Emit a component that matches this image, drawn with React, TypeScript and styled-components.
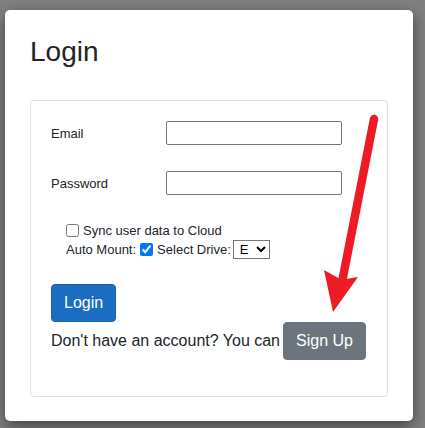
import React from "react";
import styled, { createGlobalStyle } from "styled-components";

const GlobalStyle = createGlobalStyle`
  html, body {
    margin: 0;
    padding: 0;
    background: #808080;
    font-family: "Liberation Sans", Arial, sans-serif;
    color: #212529;
  }
  * { box-sizing: border-box; }
`;

const Backdrop = styled.div`
  position: relative;
  width: 425px;
  height: 428px;
  padding: 10px 0 0 5px;
  overflow: hidden;
`;

const Modal = styled.div`
  width: 408px;
  height: 411px;
  background: #fff;
  border-radius: 5px;
  box-shadow: 0 5px 15px rgba(0, 0, 0, 0.5);
  padding: 25px 25px 24px;
`;

const Title = styled.h1`
  margin: 0;
  font-size: 28px;
  line-height: 34px;
  font-weight: 400;
  color: #212529;
`;

const Card = styled.div`
  margin-top: 31px;
  border: 1px solid rgba(0, 0, 0, 0.125);
  border-radius: 4px;
  padding: 20px;
  display: flex;
  flex-direction: column;
`;

const FieldRow = styled.div`
  display: flex;
  align-items: center;
  height: 24px;
  & + & {
    margin-top: 26px;
  }
`;

const Label = styled.label`
  width: 115px;
  font-size: 13px;
  color: #212529;
`;

const TextInput = styled.input`
  width: 176px;
  height: 24px;
  margin: 0;
  border: 1px solid #767676;
  border-radius: 2px;
  padding: 1px 2px;
  font-size: 13px;
  background: #fff;
`;

const Options = styled.div`
  margin-top: 26px;
  padding-left: 15px;
  font-size: 13px;
  color: #212529;
`;

const OptionLine = styled.div<{ $gapTop?: number }>`
  display: flex;
  align-items: center;
  height: 18px;
  margin-top: ${(p) => p.$gapTop ?? 0}px;
  white-space: nowrap;
`;

const Checkbox = styled.input.attrs({ type: "checkbox" })<{ $ml?: number }>`
  width: 13px;
  height: 13px;
  margin: 0 4px 0 ${(p) => p.$ml ?? 0}px;
  accent-color: #0075ff;
`;

const DriveSelect = styled.select`
  width: 37px;
  height: 19px;
  margin: 0 0 0 2px;
  font-family: "Liberation Sans", Arial, sans-serif;
  font-size: 13px;
  color: #000;
  border: 1px solid #767676;
  border-radius: 0;
  background: #fff;
  padding: 0 0 0 2px;
`;

const Button = styled.button<{ $variant: "primary" | "secondary" }>`
  font-family: "Liberation Sans", Arial, sans-serif;
  font-size: 16px;
  line-height: 24px;
  padding: 6px 12px;
  border-radius: 4px;
  color: #fff;
  cursor: pointer;
  background: ${(p) => (p.$variant === "primary" ? "#1b6ec2" : "#6c757d")};
  border: 1px solid ${(p) => (p.$variant === "primary" ? "#1861ac" : "#6c757d")};
`;

const LoginButton = styled(Button)`
  align-self: flex-start;
  margin-top: 26px;
`;

const SignupLine = styled.div`
  display: flex;
  align-items: baseline;
  margin-bottom: 16px;
  font-size: 16px;
  color: #212529;
  white-space: nowrap;
`;

const SignupButton = styled(Button)`
  margin-left: 3px;
`;

const ArrowLayer = styled.svg`
  position: absolute;
  left: 0;
  top: 0;
  pointer-events: none;
`;

export default function App() {
  return (
    <>
      <GlobalStyle />
      <Backdrop>
        <Modal>
          <Title>Login</Title>
          <Card>
            <FieldRow>
              <Label>Email</Label>
              <TextInput type="text" />
            </FieldRow>
            <FieldRow>
              <Label>Password</Label>
              <TextInput type="password" />
            </FieldRow>
            <Options>
              <OptionLine>
                <Checkbox />
                Sync user data to Cloud
              </OptionLine>
              <OptionLine $gapTop={1}>
                Auto Mount:
                <Checkbox $ml={4} defaultChecked />
                Select Drive:
                <DriveSelect defaultValue="E">
                  <option value="E">E</option>
                  <option value="F">F</option>
                </DriveSelect>
              </OptionLine>
            </Options>
            <LoginButton $variant="primary">Login</LoginButton>
            <SignupLine>
              Don't have an account? You can
              <SignupButton $variant="secondary">Sign Up</SignupButton>
            </SignupLine>
          </Card>
        </Modal>
        <ArrowLayer width="425" height="428" viewBox="0 0 425 428">
          <line
            x1="374"
            y1="119"
            x2="342"
            y2="282"
            stroke="#ed1c24"
            strokeWidth="8.5"
            strokeLinecap="round"
          />
          <polygon
            points="324,270 340,279 346,279 358,277 333,312"
            fill="#ed1c24"
          />
        </ArrowLayer>
      </Backdrop>
    </>
  );
}
